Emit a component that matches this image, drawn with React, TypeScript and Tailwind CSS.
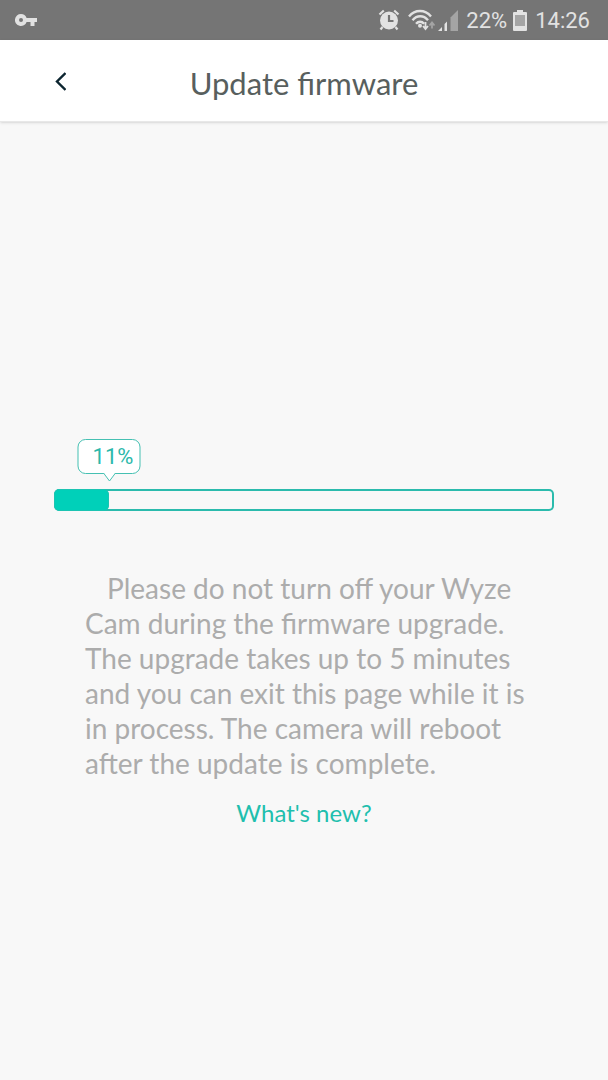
const progress = 11;

function KeyIcon() {
  return (
    <svg viewBox="0 0 22 14" className="h-[14px] w-[22px]" fill="currentColor" aria-hidden="true">
      <path
        fillRule="evenodd"
        d="M6 1a6 6 0 1 0 5.6 8H15.500v4h4V9H22V5H11.600A6 6 0 0 0 6 1Zm0 4a2 2 0 1 1 0 4 2 2 0 0 1 0-4Z"
      />
    </svg>
  );
}

function AlarmIcon() {
  return (
    <svg viewBox="0 0 22 22" className="h-[22px] w-[22px]" aria-hidden="true">
      <circle cx="11" cy="11.500" r="9" fill="currentColor" />
      <path d="M1.500 5.500 5.800 1.500M20.500 5.500 16.200 1.500M4.500 18 2.500 20.500M17.500 18l2 2.500" stroke="currentColor" strokeWidth="2.200" />
      <path d="M11 6V12H15.500" stroke="#757575" strokeWidth="2.200" fill="none" />
    </svg>
  );
}

function WifiIcon() {
  return (
    <svg viewBox="0 0 28 22" className="h-[22px] w-[28px]" fill="none" aria-hidden="true">
      <g stroke="currentColor" strokeWidth="2.400">
        <path d="M1 7.500C7 .2 17 .2 23 7.500" />
        <path d="M4.500 11.200C9 6 15.500 6 20 11.200" />
        <path d="M8 14.800c2.600-2.800 5.600-2.800 8.200 0" />
      </g>
      <circle cx="12" cy="16.800" r="2" fill="currentColor" />
      <path d="M17.500 13v7M15 17l2.500 3 2.500-3" stroke="currentColor" strokeWidth="1.800" />
      <path d="M24 19.500v-6M21.500 16.500l2.500-3 2.500 3" stroke="#a4a4a4" strokeWidth="1.800" />
    </svg>
  );
}

function SignalIcon() {
  return (
    <svg viewBox="0 0 20 21" className="h-[21px] w-[20px]" aria-hidden="true">
      <path d="M0 21 4 17V21ZM6.500 21V14L9 11.500V21Z" fill="currentColor" />
      <path d="M12.500 21V7.500L20 0V21Z" fill="#a4a4a4" />
    </svg>
  );
}

function BatteryIcon() {
  return (
    <svg viewBox="0 0 14 21" className="h-[21px] w-[14px]" aria-hidden="true">
      <path d="M4 0h6v2h3a1 1 0 0 1 1 1v17a1 1 0 0 1-1 1H1a1 1 0 0 1-1-1V3a1 1 0 0 1 1-1h3Z" fill="currentColor" />
      <path d="M2 5h10v11H2Z" fill="#a4a4a4" />
    </svg>
  );
}

function StatusBar() {
  return (
    <div className="flex h-10 items-center justify-between bg-[#757575] pl-[15px] pr-[18px] font-['Roboto',sans-serif] text-[22px] leading-6 text-[#e2e2e2]">
      <KeyIcon />
      <div className="flex items-center">
        <AlarmIcon />
        <span className="ml-2">
          <WifiIcon />
        </span>
        <span className="ml-0.5">
          <SignalIcon />
        </span>
        <span className="ml-2 pt-0.5">22%</span>
        <span className="ml-1.5">
          <BatteryIcon />
        </span>
        <span className="ml-2 pt-0.5">14:26</span>
      </div>
    </div>
  );
}

function Header() {
  return (
    <header className="relative flex h-[82px] items-center justify-center border-b border-[#e8e8e8] bg-white shadow-sm">
      <button type="button" aria-label="Back" className="absolute left-10 flex h-10 w-10 items-center justify-center text-[#0c2530]">
        <svg viewBox="0 0 12 20" className="h-5 w-3" fill="none" aria-hidden="true">
          <path d="M11.500 2 3 10.500l8.500 8.500" stroke="currentColor" strokeWidth="2.400" />
        </svg>
      </button>
      <h1 className="pt-1 text-[31px] leading-9 text-[#585f5e]">Update firmware</h1>
    </header>
  );
}

function ProgressBar({ value }: { value: number }) {
  return (
    <div className="relative pt-[50px]">
      {/* Percentage bubble follows the end of the fill */}
      <div className="absolute top-0 -translate-x-1/2" style={{ left: `${value}%` }}>
        <div className="flex h-[35px] w-[63px] items-center justify-center rounded-lg border border-[#45c0b2] bg-white pl-2 font-['Roboto',sans-serif] text-[22px] leading-6 text-[#2bb8aa]">
          {value}%
        </div>
        <svg viewBox="0 0 14 9" className="mx-auto -mt-px h-[9px] w-[14px]" aria-hidden="true">
          <path d="M1 0 7 8 13 0" fill="#fff" stroke="#45c0b2" />
        </svg>
      </div>
      <div
        role="progressbar"
        aria-label="Firmware update"
        aria-valuenow={value}
        aria-valuemin={0}
        aria-valuemax={100}
        className="h-[22px] overflow-hidden rounded-[5px] inset-ring-2 inset-ring-[#2bbbad]"
      >
        <div className="h-full rounded-[5px] border border-[#1cc4b2] bg-[#00d0b9]" style={{ width: `${value}%` }} />
      </div>
    </div>
  );
}

export default function App() {
  return (
    <div className="flex min-h-screen flex-col bg-[#f8f8f8] font-['Lato',sans-serif]">
      <StatusBar />
      <Header />
      <main className="flex-1 px-[54px] pt-[317px]">
        <ProgressBar value={progress} />
        <p className="pt-[60px] pr-5 pl-[31px] indent-[22px] text-[28px] leading-[35px] text-[#acacac]">
          Please do not turn off your Wyze Cam during the firmware upgrade. The upgrade takes up to 5 minutes and you can exit this page while it is in process. The camera will reboot after the update is complete.
        </p>
        <div className="mt-4 text-center">
          <a href="#whats-new" className="text-2xl text-[#1fbfae]">
            What's new?
          </a>
        </div>
      </main>
    </div>
  );
}
